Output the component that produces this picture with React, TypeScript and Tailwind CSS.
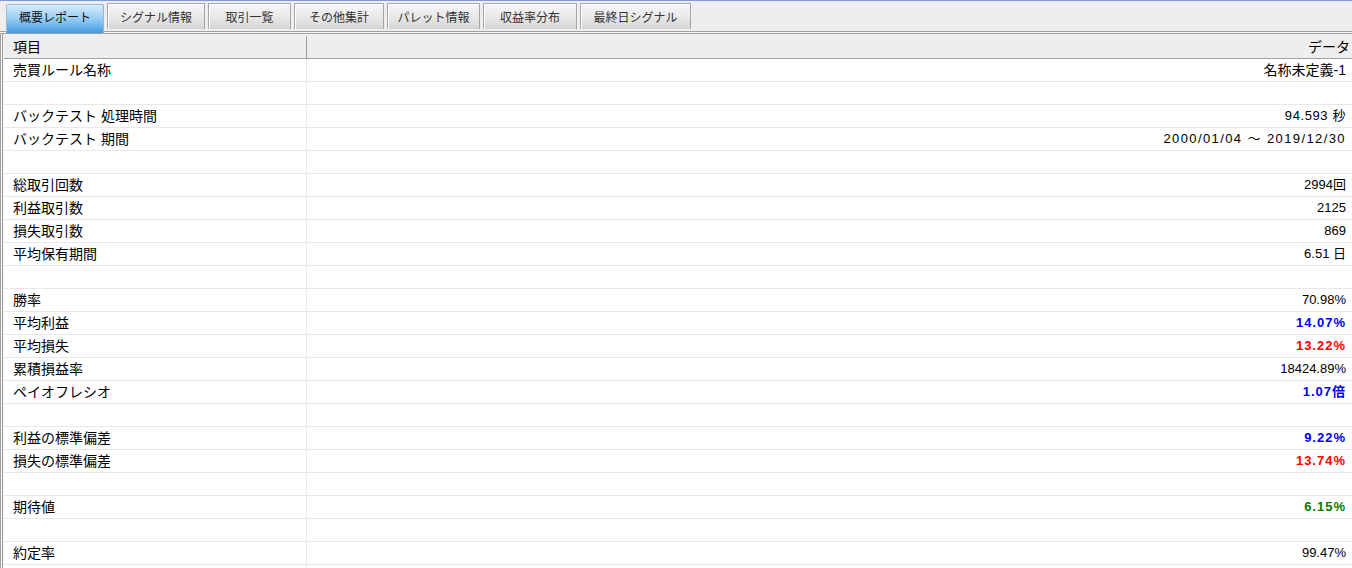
import React from "react";

type Row = { label: string; value: string; tone?: "blue" | "red" | "green"; cls?: string };

const rows: Row[] = [
  { label: "売買ルール名称", value: "名称未定義-1", cls: "text-[14px]" },
  { label: "", value: "" },
  { label: "バックテスト 処理時間", value: "94.593 秒", cls: "text-[13px] tracking-[0.6px]" },
  { label: "バックテスト 期間", value: "2000/01/04 ～ 2019/12/30", cls: "text-[13px] tracking-[1.4px]" },
  { label: "", value: "" },
  { label: "総取引回数", value: "2994回" },
  { label: "利益取引数", value: "2125" },
  { label: "損失取引数", value: "869" },
  { label: "平均保有期間", value: "6.51 日" },
  { label: "", value: "" },
  { label: "勝率", value: "70.98%" },
  { label: "平均利益", value: "14.07%", tone: "blue" },
  { label: "平均損失", value: "13.22%", tone: "red" },
  { label: "累積損益率", value: "18424.89%" },
  { label: "ペイオフレシオ", value: "1.07倍", tone: "blue" },
  { label: "", value: "" },
  { label: "利益の標準偏差", value: "9.22%", tone: "blue" },
  { label: "損失の標準偏差", value: "13.74%", tone: "red" },
  { label: "", value: "" },
  { label: "期待値", value: "6.15%", tone: "green" },
  { label: "", value: "" },
  { label: "約定率", value: "99.47%" },
  { label: "", value: "" },
];

const tabs = [
  { label: "概要レポート", w: "w-[98px]", active: true },
  { label: "シグナル情報", w: "w-[98px]" },
  { label: "取引一覧", w: "w-[83px]" },
  { label: "その他集計", w: "w-[90px]" },
  { label: "パレット情報", w: "w-[93px]" },
  { label: "収益率分布", w: "w-[94px]" },
  { label: "最終日シグナル", w: "w-[111px]" },
];

const font = { fontFamily: '"Liberation Sans", "Noto Sans CJK JP", sans-serif' };

function valueClass(r: Row) {
  if (r.tone === "blue") return "text-[#0000ff] font-bold tracking-[1px] text-[13px]";
  if (r.tone === "red") return "text-[#ff0000] font-bold tracking-[1px] text-[13px]";
  if (r.tone === "green") return "text-[#008000] font-bold tracking-[1px] text-[13px]";
  return r.cls ?? "text-[13px]";
}

export default function App() {
  return (
    <div
      className="w-[1352px] h-[568px] overflow-hidden bg-[#eeeeee] border-t border-[#7f97d3] text-black"
      style={font}
    >
      {/* tab strip */}
      <div className="h-[30px] flex items-end pl-[6px] gap-[3px]">
        {tabs.map((t) =>
          t.active ? (
            <div
              key={t.label}
              className={`${t.w} h-[29px] mb-[-2px] relative z-10 flex items-center justify-center pb-[3px] text-[12px] text-[#111] border border-b-0 border-[#9fb8d0] rounded-t-[2px] bg-linear-to-b from-[#d6ecfd] via-[#96ccf4] to-[#3f9be2]`}
            >
              {t.label}
            </div>
          ) : (
            <div
              key={t.label}
              className={`${t.w} h-[26px] mb-[2px] flex items-center justify-center pt-[2px] text-[12px] text-[#333] border border-b-0 border-[#a6a6a6] shadow-[inset_1px_1px_0_#ffffff] bg-linear-to-b from-[#f6f6f6] via-[#e9e9e9] to-[#d5d5d5]`}
            >
              {t.label}
            </div>
          )
        )}
      </div>
      {/* double line under tabs */}
      <div className="h-[3px] border-t border-b border-[#a0a0a0] bg-[#f7f7f7]" />
      {/* content */}
      <div className="flex">
        <div className="w-[3px] h-[540px] border-l border-r border-[#a0a0a0] bg-[#f7f7f7]" />
        <div className="flex-1 ml-[1px] pt-[2px]">
          {/* header */}
          <div className="h-[23px] flex border-b border-[#a0a0a0] bg-[#eeeeee] text-[14px]">
            <div className="w-[303px] border-r border-[#a0a0a0] pl-[9px] flex items-center">項目</div>
            <div className="flex-1 pr-[2px] flex items-center justify-end">データ</div>
          </div>
          {/* rows */}
          <div className="bg-white">
            {rows.map((r, i) => (
              <div key={i} className="h-[23px] flex border-b border-[#e8e8e8] text-[14px]">
                <div className="w-[303px] border-r border-[#e8e8e8] pl-[9px] flex items-center whitespace-nowrap">
                  {r.label}
                </div>
                <div
                  className={
                    "flex-1 pr-[6px] flex items-center justify-end whitespace-nowrap " + valueClass(r)
                  }
                >
                  {r.value}
                </div>
              </div>
            ))}
          </div>
        </div>
      </div>
    </div>
  );
}
